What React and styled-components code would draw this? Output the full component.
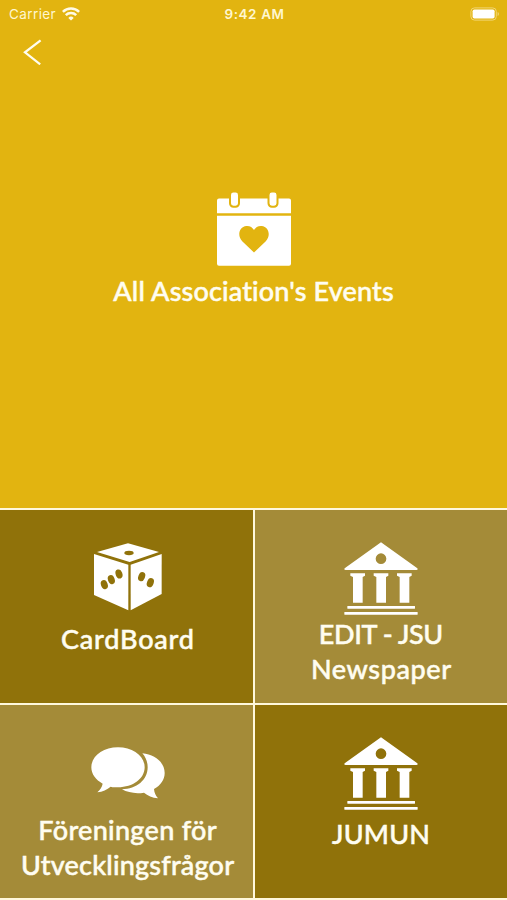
import styled, { createGlobalStyle } from "styled-components"

const GlobalStyle = createGlobalStyle`
  * {
    box-sizing: border-box;
  }
  body {
    margin: 0;
    background: #e2b410;
  }
`

const Screen = styled.div`
  display: grid;
  grid-template-rows: 508px 388px;
  gap: 2px;
  width: 507px;
  height: 900px;
  padding-bottom: 2px;
  background: #fff8dc;
  color: #fffdf0;
  overflow: hidden;
`
const Hero = styled.header`
  display: flex;
  flex-direction: column;
  background: #e2b410;
`
const StatusBar = styled.div`
  display: grid;
  grid-template-columns: 1fr auto 1fr;
  align-items: center;
  height: 28px;
  padding: 0 7px 0 9px;
  font-family: Inter, "Liberation Sans", sans-serif;
  font-size: 13.5px;
  line-height: 16px;
  color: #fff7cf;
`
const Carrier = styled.div`
  display: flex;
  align-items: center;
  gap: 6px;
  letter-spacing: 0.4px;
`
const Time = styled.div`
  font-weight: 600;
  letter-spacing: 0.6px;
`
const Battery = styled.svg`
  justify-self: end;
`
const BackButton = styled.button`
  width: 60px;
  height: 48px;
  padding: 0 0 0 23px;
  border: 0;
  background: none;
  line-height: 0;
  text-align: left;
`
const AllEvents = styled.div`
  display: flex;
  flex-direction: column;
  align-items: center;
  padding-top: 116px;
`
const Tiles = styled.main`
  display: grid;
  grid-template-columns: 253px 252px;
  grid-template-rows: 193px 193px;
  gap: 2px;
`
const Tile = styled.section`
  display: flex;
  flex-direction: column;
  align-items: center;
  padding-top: ${({ $top }) => $top}px;
  background: ${({ $dark }) => ($dark ? "#90720a" : "#a48b38")};

  &:nth-child(odd) {
    padding-left: 2px;
  }
`
const Label = styled.div`
  margin-top: ${({ $gap }) => $gap}px;
  font-family: Lato, "Open Sans", sans-serif;
  font-size: 27px;
  font-weight: 500;
  line-height: 34.5px;
  text-align: center;
  white-space: nowrap;
  -webkit-text-stroke: 0.5px currentColor;
`
const Line = styled.span`
  display: block;
  letter-spacing: ${({ $spacing }) => $spacing}px;
  margin-right: ${({ $spacing }) => -$spacing}px;
`

const WifiIcon = () => (
  <svg width="18" height="14" viewBox="0 0 18 14" fill="none" stroke="#fffbe6" strokeWidth="2.5">
    <path d="M0.9 4.8a11.6 11.6 0 0 1 16.2 0" />
    <path d="M3.800 8.200a7.4 7.4 0 0 1 10.400 0" />
    <path d="M9 13.6 6.3 10.9a3.9 3.9 0 0 1 5.4 0z" fill="#fffbe6" stroke="none" />
  </svg>
)

const BatteryIcon = () => (
  <Battery width="30" height="14" viewBox="0 0 30 14">
    <rect x="0.9" y="0.9" width="25.4" height="12.2" rx="3.6" fill="none" stroke="#f1d574" strokeWidth="1" />
    <rect x="2.6" y="2.5" width="22" height="9" rx="1.8" fill="#fff" />
    <path d="M27.6 5v4c1.8-.6 1.8-3.4 0-4z" fill="#f1d574" />
  </Battery>
)

const BackIcon = () => (
  <svg width="20" height="26" viewBox="0 0 20 26" fill="none" stroke="#fffdf0" strokeWidth="2.3">
    <path d="M17.6 1.4 2 13.3l15.2 12" />
  </svg>
)

const CalendarIcon = () => (
  <svg width="76" height="76" viewBox="0 0 76 76" fill="#fff">
    <path d="M3 6.500h70a2 2 0 0 1 2 2v12.800H1V8.500a2 2 0 0 1 2-2z" />
    <path d="M1 23.700h74v48a2 2 0 0 1-2 2H3a2 2 0 0 1-2-2z" />
    <g stroke="#e2b410" strokeWidth="2">
      <rect x="14" y="-0.500" width="9" height="15.200" rx="3.4" />
      <rect x="52.500" y="-0.500" width="9" height="15.200" rx="3.4" />
    </g>
    <path
      d="M38 60.4 26.2 49.2c-5-5-3.6-14.4 4.2-15.2 3.5-.3 6 1.4 7.6 4 1.6-2.6 4.1-4.3 7.6-4 7.8.8 9.200 10.200 4.200 15.200z"
      fill="#e2b410"
    />
  </svg>
)

const DiceIcon = () => (
  <svg width="68" height="68" viewBox="133 39 204 204" fill="#fff">
    <path d="M235 40 328 66 240 96 142 66z" />
    <path d="M133 72 236 104V241L133 195z" />
    <path d="M243 104 336 72V192L243 241z" />
    <g fill="#90720a">
      <ellipse cx="238" cy="69" rx="14" ry="6.5" />
      <ellipse cx="164" cy="164" rx="10" ry="14" transform="rotate(-20 164 164)" />
      <ellipse cx="185" cy="149" rx="10" ry="14" transform="rotate(-20 185 149)" />
      <ellipse cx="208" cy="132" rx="10" ry="14" transform="rotate(-20 208 132)" />
      <ellipse cx="276" cy="140" rx="10" ry="14" transform="rotate(22 276 140)" />
      <ellipse cx="302" cy="158" rx="10" ry="14" transform="rotate(22 302 158)" />
    </g>
  </svg>
)

const BankIcon = () => (
  <svg width="74" height="73" viewBox="133 35 222 219" fill="#fff">
    <path
      fillRule="evenodd"
      d="M244 36 353 114Q356 119 350 119H138Q132 119 135 114zM244 69a16 16 0 1 0 0 32 16 16 0 0 0 0-32z"
    />
    {[152, 222, 292].map((x) => (
      <path key={x} d={`M${x} 129h44v7l-7 4v77h-29v-77l-8-4z`} />
    ))}
    <rect x="143" y="227" width="203" height="8" rx="1" />
    <rect x="134" y="245" width="220" height="8" rx="1" />
  </svg>
)

const ChatIcon = () => (
  <svg width="74" height="52" viewBox="273 35 222 156" fill="#fff">
    <path d="M354 36c45 0 80 26 80 60s-35 60-80 60c-8 0-15 0-22-2-11 9-24 15-40 17 8-7 14-15 16-26-21-11-34-29-34-49 0-34 35-60 80-60z" />
    <path d="M427 54c39 4 67 28 67 59 0 20-12 37-32 48 1 11 5 20 12 28-17-2-31-8-42-17-25 4-48 0-66-10 44-1 77-28 77-66 0-16-6-31-16-42z" />
  </svg>
)

const tiles = [
  { Icon: DiceIcon, dark: true, top: 33, gap: 11, lines: [["CardBoard", 0.8]] },
  { Icon: BankIcon, dark: false, top: 32, gap: 2, lines: [["EDIT - JSU", -0.4], ["Newspaper", 0.6]] },
  { Icon: ChatIcon, dark: false, top: 42, gap: 14, lines: [["Föreningen för", 0.3], ["Utvecklingsfrågor", 0.2]] },
  { Icon: BankIcon, dark: true, top: 32, gap: 7, lines: [["JUMUN", 0.2]] },
]

const App = () => {
  return (
    <>
      <GlobalStyle />
      <Screen>
        <Hero>
          <StatusBar>
            <Carrier>
              Carrier
              <WifiIcon />
            </Carrier>
            <Time>9:42 AM</Time>
            <BatteryIcon />
          </StatusBar>
          <BackButton aria-label="Back">
            <BackIcon />
          </BackButton>
          <AllEvents>
            <CalendarIcon />
            <Label $gap={6}>
              <Line $spacing={0.15}>All Association's Events</Line>
            </Label>
          </AllEvents>
        </Hero>
        <Tiles>
          {tiles.map(({ Icon, dark, top, gap, lines }) => (
            <Tile key={lines[0][0]} $dark={dark} $top={top}>
              <Icon />
              <Label $gap={gap}>
                {lines.map(([text, spacing]) => (
                  <Line key={text} $spacing={spacing}>{text}</Line>
                ))}
              </Label>
            </Tile>
          ))}
        </Tiles>
      </Screen>
    </>
  )
}

export default App
